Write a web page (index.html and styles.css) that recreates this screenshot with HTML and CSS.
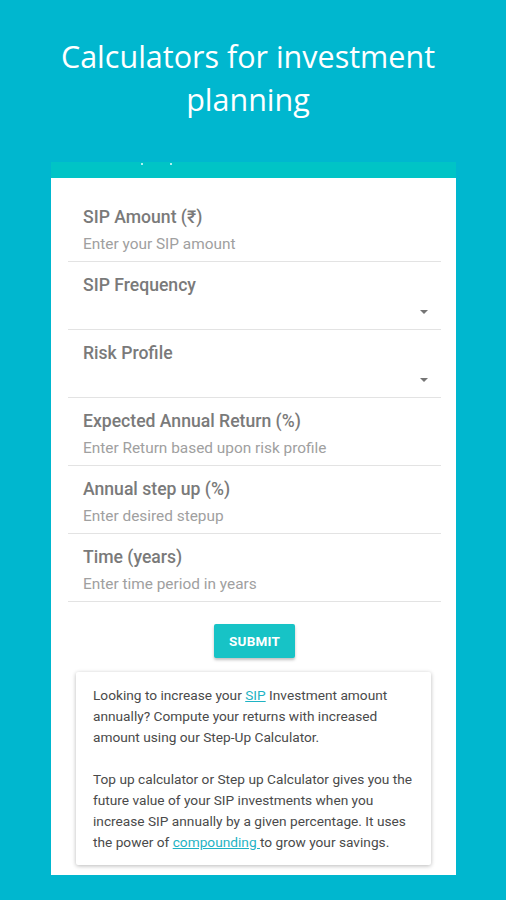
FILE: index.html
```html
<!DOCTYPE html>
<html>
<head>
<meta charset="utf-8">
<link rel="stylesheet" href="styles.css">
</head>
<body>
<h1 class="title">Calculators for investment planning</h1>
<div class="card">
  <div class="card-bar"><span class="dot dot-a"></span><span class="dot dot-b"></span></div>
  <form class="form">
    <div class="field">
      <div class="label">SIP Amount (₹)</div>
      <div class="placeholder">Enter your SIP amount</div>
    </div>
    <div class="field">
      <div class="label">SIP Frequency</div>
      <div class="select"><span class="caret"></span></div>
    </div>
    <div class="field">
      <div class="label">Risk Profile</div>
      <div class="select"><span class="caret"></span></div>
    </div>
    <div class="field">
      <div class="label">Expected Annual Return (%)</div>
      <div class="placeholder">Enter Return based upon risk profile</div>
    </div>
    <div class="field">
      <div class="label">Annual step up (%)</div>
      <div class="placeholder">Enter desired stepup</div>
    </div>
    <div class="field">
      <div class="label">Time (years)</div>
      <div class="placeholder">Enter time period in years</div>
    </div>
    <div class="actions"><button type="button" class="submit">SUBMIT</button></div>
  </form>
  <div class="info">
    <p>Looking to increase your <a href="#">SIP</a> Investment amount annually? Compute your returns with increased amount using our Step-Up Calculator.</p>
    <p>Top up calculator or Step up Calculator gives you the future value of your SIP investments when you increase SIP annually by a given percentage. It uses the power of <a href="#">compounding </a>to grow your savings.</p>
  </div>
</div>
</body>
</html>
```
FILE: styles.css
```css
html, body {
  margin: 0;
  padding: 0;
}
body {
  background: #00b7cf;
  width: 506px;
  height: 900px;
  overflow: hidden;
  font-family: Roboto, "Liberation Sans", sans-serif;
}
.title {
  margin: 0;
  padding: 35px 44px 0 34px;
  color: #ffffff;
  font-family: "Open Sans", "Noto Sans", sans-serif;
  font-weight: 400;
  font-size: 30.5px;
  line-height: 43px;
  text-align: center;
}
.card {
  margin: 41px 50px 0 51px;
  background: #ffffff;
  padding-bottom: 10px;
}
.card-bar {
  position: relative;
  height: 16px;
  background: #00c4c6;
}
.dot {
  position: absolute;
  top: 1px;
  width: 2px;
  height: 2px;
  border-radius: 1px;
  background: #e8ffff;
}
.dot-a { left: 90px; }
.dot-b { left: 119px; }
.form {
  padding: 18px 15px 0 17px;
}
.field {
  padding: 9px 15px 6px;
  border-bottom: 1px solid #e3e3e3;
  margin-bottom: 2px;
}
.label {
  font-size: 17.6px;
  line-height: 24px;
  font-weight: 500;
  color: #7a7a7a;
}
.placeholder {
  margin-top: 4px;
  font-size: 15.4px;
  line-height: 22px;
  color: #a0a0a0;
}
.select {
  margin-top: 4px;
  height: 22px;
  display: flex;
  justify-content: flex-end;
  align-items: center;
}
.caret {
  width: 0;
  height: 0;
  border-left: 4px solid transparent;
  border-right: 4px solid transparent;
  border-top: 4px solid #757575;
  margin-right: -2px;
}
.actions {
  display: flex;
  justify-content: center;
  padding-top: 20px;
}
.submit {
  width: 81px;
  height: 34px;
  border: none;
  border-radius: 2px;
  background: #17c3c6;
  color: #ffffff;
  font-family: Roboto, "Liberation Sans", sans-serif;
  font-weight: 700;
  font-size: 13.5px;
  letter-spacing: 0.2px;
  box-shadow: 0 2px 3px rgba(0, 0, 0, 0.25);
}
.info {
  margin: 14px 25px 0 25px;
  padding: 13px 17px 12px;
  background: #ffffff;
  box-shadow: 0 1px 4px rgba(0, 0, 0, 0.28);
  border-radius: 2px;
  font-size: 13.7px;
  line-height: 21px;
  color: #4a4a4a;
}
.info p {
  margin: 0;
}
.info p + p {
  margin-top: 21px;
}
.info a {
  color: #1fb3c4;
  text-decoration: underline;
}
```
